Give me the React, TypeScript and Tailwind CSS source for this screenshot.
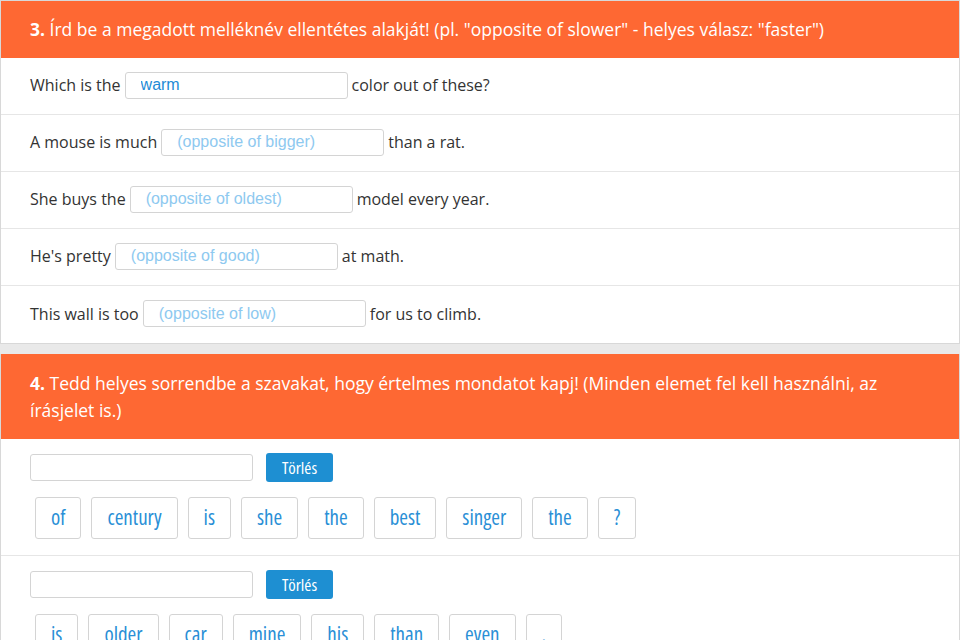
import React from 'react';

type GapRow = { before: string; value?: string; placeholder: string; after: string };

const gapRows: GapRow[] = [
  { before: 'Which is the', value: 'warm', placeholder: '', after: 'color out of these?' },
  { before: 'A mouse is much', placeholder: '(opposite of bigger)', after: 'than a rat.' },
  { before: 'She buys the', placeholder: '(opposite of oldest)', after: 'model every year.' },
  { before: "He's pretty", placeholder: '(opposite of good)', after: 'at math.' },
  { before: 'This wall is too', placeholder: '(opposite of low)', after: 'for us to climb.' },
];

const orderSets: string[][] = [
  ['of', 'century', 'is', 'she', 'the', 'best', 'singer', 'the', '?'],
  ['is', 'older', 'car', 'mine', 'his', 'than', 'even', '.'],
];

const sans = { fontFamily: '"Open Sans", "Noto Sans", sans-serif' };
const condensed = { fontFamily: '"Open Sans", "Liberation Sans Narrow", sans-serif', fontStretch: '75%' };
const arial = { fontFamily: '"Liberation Sans", Arial, sans-serif' };

const TaskHeader: React.FC<{ num: number; tall?: boolean; children: React.ReactNode }> = ({ num, tall, children }) => (
  <div
    className={`bg-[#fe6833] px-[29px] text-[17.5px] leading-[27px] text-white ${
      tall ? 'pt-[16px] pb-[15px]' : 'py-[15px]'
    }`}
  >
    <span className="font-bold">{num}.</span> {children}
  </div>
);

const GapInput: React.FC<{ value?: string; placeholder: string }> = ({ value, placeholder }) => (
  <input
    readOnly
    defaultValue={value}
    placeholder={placeholder}
    style={arial}
    className="mx-1 h-[27px] w-[223px] rounded-[3px] border border-[#d4d4d4] bg-white px-[15px] text-[16px] text-[#1e8bd6] outline-none placeholder:text-[#8ec9f0]"
  />
);

const OrderTask: React.FC<{ words: string[]; last?: boolean }> = ({ words, last }) => (
  <div className={`px-[29px] pt-[14px] pb-[16px] ${last ? '' : 'border-b border-[#e6e6e6]'}`}>
    <div className="flex items-center gap-[13px]">
      <input
        readOnly
        className="h-[27px] w-[223px] rounded-[3px] border border-[#d4d4d4] bg-white outline-none"
      />
      <button
        style={condensed}
        className="h-[29px] w-[67px] rounded-[3px] bg-[#1e8fd2] text-[17px] text-white"
      >
        Törlés
      </button>
    </div>
    <div className="mt-[15px] flex flex-wrap gap-[10px] px-[5px]">
      {words.map((w, i) => (
        <button
          key={i}
          style={condensed}
          className="h-[42px] rounded-[3px] border border-[#d4d4d4] bg-white px-[15px] text-[21px] text-[#2a8fd6]"
        >
          {w}
        </button>
      ))}
    </div>
  </div>
);

export default function App() {
  return (
    <div className="min-h-screen bg-[#e9e9e9]" style={sans}>
      <section className="border border-[#d8d8d8] bg-white">
        <TaskHeader num={3}>
          Írd be a megadott melléknév ellentétes alakját! (pl. "opposite of slower" - helyes válasz: "faster")
        </TaskHeader>
        {gapRows.map((r, i) => (
          <div
            key={i}
            className={`flex h-[57px] items-center px-[29px] pb-[2px] text-[16px] text-[#333] ${
              i < gapRows.length - 1 ? 'border-b border-[#e6e6e6]' : ''
            }`}
          >
            <span>{r.before}</span>
            <GapInput value={r.value} placeholder={r.placeholder} />
            <span>{r.after}</span>
          </div>
        ))}
      </section>

      <section className="mt-[10px] border-x border-[#d8d8d8] bg-white">
        <TaskHeader num={4} tall>
          Tedd helyes sorrendbe a szavakat, hogy értelmes mondatot kapj! (Minden elemet fel kell használni, az
          írásjelet is.)
        </TaskHeader>
        {orderSets.map((ws, i) => (
          <OrderTask key={i} words={ws} last={i === orderSets.length - 1} />
        ))}
      </section>
    </div>
  );
}
